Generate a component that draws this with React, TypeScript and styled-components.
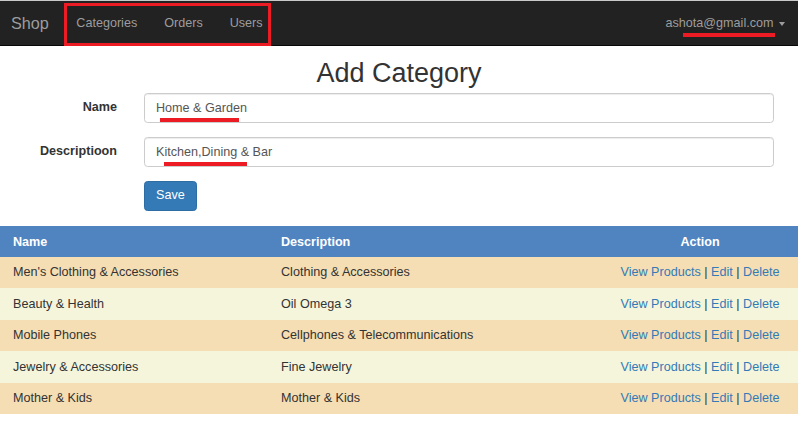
import { ReactElement } from 'react';
import styled, { createGlobalStyle } from 'styled-components';

const GlobalStyle = createGlobalStyle`
  body {
    margin: 0;
    font-family: "Liberation Sans", Arial, Helvetica, sans-serif;
    font-size: 12.6px;
    line-height: 1.42857;
    color: #333;
    background: #fff;
  }
  * { box-sizing: border-box; }
`;

const Navbar = styled.nav`
  display: flex;
  align-items: center;
  height: 46px;
  border-top: 1px solid #c9c9c9;
  border-bottom: 1px solid #080808;
  background: #222;
  color: #9d9d9d;
`;

const Brand = styled.a`
  padding: 0 14px 0 11px;
  font-size: 16.2px;
  line-height: 44px;
  color: #9d9d9d;
  text-decoration: none;
`;

const NavGroup = styled.div`
  position: relative;
  display: flex;
  height: 44px;
`;

const NavLink = styled.a`
  padding: 0 13.5px;
  line-height: 44px;
  color: #9d9d9d;
  text-decoration: none;
`;

/* red annotation frame drawn over the nav links */
const Frame = styled.span`
  position: absolute;
  left: 1px;
  top: 2px;
  width: 207px;
  height: 43px;
  border: 3px solid #ed1c24;
  pointer-events: none;
`;

const UserMenu = styled.a`
  position: relative;
  margin-left: auto;
  padding: 0 13.5px 0 0;
  line-height: 44px;
  color: #9d9d9d;
  text-decoration: none;
  display: flex;
  align-items: center;
  gap: 5px;
`;

const Caret = styled.span`
  width: 0;
  height: 0;
  border-top: 4px solid #9d9d9d;
  border-left: 3.6px solid transparent;
  border-right: 3.6px solid transparent;
  margin-top: 1px;
`;

const Mark = styled.span<{ $left: number; $top: number; $width: number; $height?: number }>`
  position: absolute;
  left: ${(p) => p.$left}px;
  top: ${(p) => p.$top}px;
  width: ${(p) => p.$width}px;
  height: ${(p) => p.$height ?? 4}px;
  background: #ed1c24;
  pointer-events: none;
`;

const Title = styled.h2`
  margin: 13px 0 4px;
  text-align: center;
  font-size: 27px;
  font-weight: 400;
  line-height: 1.1;
  color: #333;
`;

const Form = styled.form`
  display: grid;
  grid-template-columns: 117px 630px;
  column-gap: 27px;
  row-gap: 14px;
  margin-bottom: 15px;
`;

const Label = styled.label`
  text-align: right;
  font-weight: 700;
  padding-top: 6px;
`;

const Field = styled.div`
  position: relative;
  height: 30px;
  padding: 0 11px;
  border: 1px solid #ccc;
  border-radius: 3.6px;
  box-shadow: inset 0 1px 1px rgba(0, 0, 0, 0.075);
  color: #555;
  line-height: 28px;
`;

const SaveButton = styled.button`
  grid-column: 2;
  justify-self: start;
  height: 30px;
  padding: 0 11px;
  border: 1px solid #2e6da4;
  border-radius: 3.6px;
  background: #337ab7;
  color: #fff;
  font: inherit;
`;

const Table = styled.table`
  width: 100%;
  border-collapse: collapse;
  table-layout: fixed;
`;

const Th = styled.th<{ $w?: number; $center?: boolean }>`
  width: ${(p) => (p.$w ? `${p.$w}px` : 'auto')};
  padding: 7px 13px 6px;
  text-align: ${(p) => (p.$center ? 'center' : 'left')};
  font-weight: 700;
  color: #fff;
  background: #5084c1;
  line-height: 18px;
`;

const Row = styled.tr<{ $alt: boolean }>`
  background: ${(p) => (p.$alt ? '#f5f5dc' : '#f5deb3')};
`;

const Td = styled.td<{ $center?: boolean }>`
  padding: 7.5px 13px 6.5px;
  line-height: 17.5px;
  text-align: ${(p) => (p.$center ? 'center' : 'left')};
`;

const Link = styled.a`
  color: #337ab7;
  text-decoration: none;
`;

const categories = [
  ["Men's Clothing & Accessories", 'Clothing & Accessories'],
  ['Beauty & Health', 'Oil Omega 3'],
  ['Mobile Phones', 'Cellphones & Telecommunications'],
  ['Jewelry & Accessories', 'Fine Jewelry'],
  ['Mother & Kids', 'Mother & Kids'],
];

export default function App(): ReactElement {
  return (
    <>
      <GlobalStyle />
      <Navbar>
        <Brand href="#">Shop</Brand>
        <NavGroup>
          <NavLink href="#">Categories</NavLink>
          <NavLink href="#">Orders</NavLink>
          <NavLink href="#">Users</NavLink>
          <Frame />
        </NavGroup>
        <UserMenu href="#">
          ashota@gmail.com
          <Caret />
          <Mark $left={17} $top={32} $width={92} />
        </UserMenu>
      </Navbar>

      <Title>Add Category</Title>

      <Form>
        <Label>Name</Label>
        <Field>
          Home &amp; Garden
          <Mark $left={15} $top={24} $width={79} />
        </Field>
        <Label>Descriptioon</Label>
        <Field>
          Kitchen,Dining &amp; Bar
          <Mark $left={19} $top={24.5} $width={83} $height={3.5} />
        </Field>
        <SaveButton type="button">Save</SaveButton>
      </Form>

      <Table>
        <thead>
          <tr>
            <Th $w={268}>Name</Th>
            <Th>Description</Th>
            <Th $w={196} $center>
              Action
            </Th>
          </tr>
        </thead>
        <tbody>
          {categories.map(([name, desc], i) => (
            <Row key={name} $alt={i % 2 === 1}>
              <Td>{name}</Td>
              <Td>{desc}</Td>
              <Td $center>
                <Link href="#">View Products</Link> | <Link href="#">Edit</Link> |{' '}
                <Link href="#">Delete</Link>
              </Td>
            </Row>
          ))}
        </tbody>
      </Table>
    </>
  );
}
